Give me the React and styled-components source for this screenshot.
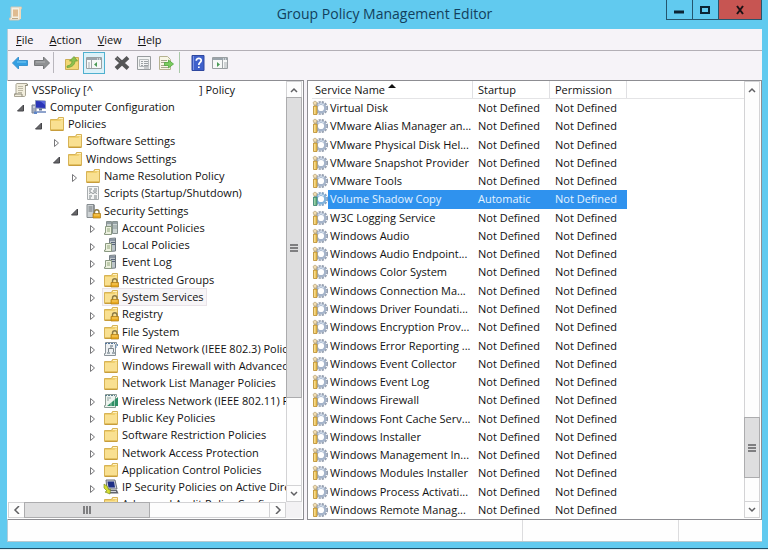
import React, { useState } from "react";
import styled, { createGlobalStyle } from "styled-components";

const GlobalStyle = createGlobalStyle`
  * {
    box-sizing: border-box;
  }
  body {
    margin: 0;
    font-family: "Open Sans", "Noto Sans", sans-serif;
    font-size: 11px;
    color: #111;
  }
  button {
    font: inherit;
    color: inherit;
    padding: 0;
    border: 0;
    background: none;
  }
`;

const Desktop = styled.div`
  height: 100vh;
  display: flex;
  flex-direction: column;
  background: #e9f0f2;
`;

const Window = styled.div`
  flex: 1;
  min-height: 0;
  margin-bottom: 1px;
  display: flex;
  flex-direction: column;
  padding: 0 6px 6px 7px;
  background: #61caef;
  border-bottom: 1px solid #1d506b;
`;

const TitleBar = styled.header`
  height: 29px;
  flex: none;
  display: grid;
  grid-template-columns: 96px 1fr 96px;
  align-items: start;
`;

const TitleIcon = styled.div`
  padding: 6px 0 0 1px;
  svg {
    display: block;
  }
`;

const Title = styled.h1`
  margin: 0;
  font-size: 14px;
  font-weight: 400;
  line-height: 28px;
  text-align: center;
  white-space: nowrap;
  color: #123f5c;
`;

const WindowButtons = styled.div`
  display: flex;
  height: 20px;
  border: 1px solid #24566e;
  border-top: 0;
`;

const WindowButton = styled.button`
  flex: ${(p) => (p.$close ? "44" : "26")} 1 0;
  display: grid;
  place-items: center;
  background: ${(p) => (p.$close ? "#c75552" : "transparent")};
  & + & {
    border-left: 1px solid #24566e;
  }
`;

const Client = styled.div`
  flex: 1;
  min-height: 0;
  display: flex;
  flex-direction: column;
  background: #f6f3f8;
  border-left: 1px solid #b4cdd9;
`;

const MenuBar = styled.nav`
  height: 22px;
  flex: none;
  display: flex;
  align-items: center;
  gap: 16px;
  padding-left: 8px;
  border-bottom: 1px solid #b3afb6;
`;

const MenuItem = styled.button`
  line-height: 20px;
  &::first-letter {
    text-decoration: underline;
  }
`;

const Toolbar = styled.div`
  height: 29px;
  flex: none;
  display: flex;
  align-items: center;
  padding: 0 0 6px 1px;
`;

const ToolButton = styled.button`
  width: 22px;
  height: 22px;
  display: grid;
  place-items: center;
  border: 1px solid ${(p) => (p.$active ? "#4fb0cf" : "transparent")};
  background: ${(p) => (p.$active ? "#dcf1f9" : "transparent")};
`;

const ToolDivider = styled.div`
  width: 1px;
  height: 21px;
  margin: 0 7px 0 ${(p) => p.$before || 0}px;
  background: ${(p) => p.$tint || "#b9b6bd"};
`;

const ToolGap = styled.div`
  width: 6px;
`;

const Panes = styled.div`
  flex: 1;
  min-height: 0;
  display: grid;
  grid-template-columns: 296fr 455fr;
  column-gap: 3px;
`;

const Pane = styled.section`
  min-width: 0;
  min-height: 0;
  display: grid;
  grid-template-columns: minmax(0, 1fr) 16px;
  grid-template-rows: minmax(0, 1fr) auto;
  background: #fff;
  border: 1px solid #8d8d92;
  border-left-color: ${(p) => (p.$flush ? "transparent" : "#8d8d92")};
  padding-right: 1px;
  padding-bottom: 1px;
  margin-left: ${(p) => (p.$flush ? "-1px" : "0")};
`;

const TreeView = styled.div`
  overflow: hidden;
`;

// 25 rows share the list height
const Tree = styled.ul`
  margin: 0;
  padding: 0;
  height: 432px;
  list-style: none;
  display: grid;
  grid-auto-rows: 1fr;
`;

const TreeRow = styled.li`
  display: flex;
  align-items: center;
  padding-left: ${(p) => 5 + p.$level * 18}px;
  white-space: pre;
`;

const Toggle = styled.button`
  width: 14px;
  height: 14px;
  margin-left: -14px;
  flex: none;
  svg {
    display: block;
    margin-top: 3px;
  }
`;

const TreeLabel = styled.span`
  display: flex;
  align-items: center;
  gap: 3px;
  line-height: 16px;
  padding-right: 2px;
  background: ${(p) => (p.$selected ? "#f7f5f7" : "transparent")};
  box-shadow: ${(p) => (p.$selected ? "0 0 0 1px #e9e3e8" : "none")};
  svg {
    flex: none;
  }
`;

const Redacted = styled.span`
  display: inline-block;
  width: 106px;
`;

const ScrollBar = styled.div`
  display: flex;
  flex-direction: ${(p) => (p.$horizontal ? "row" : "column")};
  ${(p) => (p.$horizontal ? "height: 16px" : "width: 16px")};
  border: 1px solid #d3d3d5;
  background: #fdfdfd;
`;

const ScrollArrow = styled.button`
  flex: none;
  width: ${(p) => (p.$horizontal ? 16 : 14)}px;
  height: ${(p) => (p.$horizontal ? 14 : 16)}px;
  display: grid;
  place-items: center;
  &:last-child {
    ${(p) => (p.$horizontal ? "border-left" : "border-top")}: 1px solid #d3d3d5;
  }
`;

const Track = styled.div`
  flex: ${(p) => p.$size} 1 0;
`;

const Thumb = styled.div`
  flex: ${(p) => p.$size} 1 0;
  display: grid;
  place-items: center;
  background: #dededf;
  outline: 1px solid #acacae;
`;

const Corner = styled.div`
  background: #f3f2f4;
`;

const ServiceView = styled.div`
  overflow: hidden;
  padding-left: 4px;
`;

const ServiceTable = styled.table`
  display: block;
  width: 100%;
`;

const columns = "161px 77px 77px 1fr";

const Head = styled.thead`
  display: block;
  border-bottom: 1px solid #e4e4e6;
  tr {
    display: grid;
    grid-template-columns: ${columns};
  }
`;

const HeadCell = styled.th`
  padding: 0 0 0 ${(p) => p.$pad || 5}px;
  border-right: 1px solid #e0e0e3;
  font-weight: 400;
  line-height: 17px;
  text-align: left;
  white-space: nowrap;
  svg {
    vertical-align: 6px;
    margin-left: 3px;
  }
`;

const Body = styled.tbody`
  display: grid;
  grid-auto-rows: 1fr;
  height: 420px;
`;

const ServiceRow = styled.tr`
  display: grid;
  grid-template-columns: ${columns};
  align-items: center;
  color: ${(p) => (p.$selected ? "#e4f3ff" : "inherit")};
  background: ${(p) =>
    p.$selected
      ? "linear-gradient(#2f92ee, #2f92ee) 16px 0 / 299px 100% no-repeat"
      : "none"};
`;

const Cell = styled.td`
  padding: 0 0 0 5px;
  line-height: 18px;
  white-space: nowrap;
`;

const NameCell = styled(Cell)`
  display: flex;
  align-items: center;
  gap: 2px;
  padding: 0;
  svg {
    flex: none;
  }
`;

const StatusBar = styled.footer`
  height: 22px;
  flex: none;
  display: grid;
  grid-template-columns: 514fr 156fr 84fr;
  background: #fefefe;
  border-bottom: 1px solid #b9c9cf;
  div + div {
    border-left: 1px solid #dcdcde;
  }
`;

const Svg = ({ children, size = 16, h }) => (
  <svg
    width={size}
    height={h || size}
    viewBox={`0 0 ${size} ${h || size}`}
    fill="none"
    aria-hidden="true"
  >
    {children}
  </svg>
);

const Scroll = () => (
  <Svg>
    <path d="M4 1.5h10v2h-1.5v9.5c0 1-.6 1.500-1.500 1.500H1.500V12H3V3c0-1 .4-1.500 1-1.500z" fill="#f2eedd" stroke="#a9a595" />
    <path d="M12 3.500h2.500V2M1.500 12H9v2.500" stroke="#8b8878" />
    <path d="M5 4.500h5M5 6.500h5M5 8.500h5M5 10.500h4" stroke="#bdb9a5" />
  </Svg>
);

const TitleScroll = () => (
  <Svg>
    <path d="M3 1h10.500v2H12v9.500c0 1-.6 1.500-1.500 1.500H1.500v-2H3z" fill="#f5efe2" stroke="#cfc7b6" />
    <path d="M5 3.500h5v7H5z" fill="#dfbb91" />
    <path d="M12 1v12" stroke="#f0d9ba" strokeWidth="2" />
    <path d="M4 12.500h6" stroke="#bda786" />
  </Svg>
);

const Computer = () => (
  <Svg>
    <path d="M1 6h4v8H1z" fill="#a6adbd" stroke="#7d8595" />
    <path d="M2 8h2" stroke="#eef1f6" />
    <path d="M4.500 1.500 14.500 2v7.500l-10-.5z" fill="#2a35b8" stroke="#8b97bb" />
    <path d="M9 2h5v4z" fill="#5867dc" />
    <path d="M8 9.500h3v2H8z" fill="#5c6d90" />
    <path d="M6 12h9v2H6z" fill="#8fa3cc" />
    <path d="M3 12.500h3V15H3z" fill="#5d86c9" />
  </Svg>
);

const Folder = ({ lock }) => (
  <Svg>
    <path d="M1.500 3.500h7l1-2h5v12.500h-13z" fill="#f0cf6c" stroke="#d7b356" />
    <path d="M2 5h9.500l1-1.500H14V13H2z" fill="#f9e091" />
    <path d="M10 2.500h4" stroke="#fff3c5" />
    <path d="M1.500 14.500h13" stroke="#c79d3c" />
    {lock && <Lock />}
  </Svg>
);

const Lock = () => (
  <g>
    <path d="M9.500 11V9a2.200 2.200 0 0 1 4.500 0v2" stroke="#8b7a47" strokeWidth="1.400" />
    <path d="M8 10.500h7.500V15H8z" fill="#e9a91f" stroke="#ad7a12" strokeWidth=".7" />
    <path d="M9 12h5.500" stroke="#f8d270" />
  </g>
);

const ScriptIcon = () => (
  <Svg>
    <path d="M2.500 1.500h11v13h-11z" fill="#f4f5f5" stroke="#a8adaf" />
    <path d="M4 4h3M9 4h3M4 6h2M8 6h4M4 11h3M9 11h3M4 13h2M9 13h3" stroke="#7d8487" />
    <path d="m4 8.500 2-1 2 1 2-1 2 1" stroke="#8b9194" />
  </Svg>
);

const SecurityIcon = () => (
  <Svg>
    <path d="M2 1.500h7v13H2z" fill="#cdd2d4" stroke="#858b8f" />
    <path d="M3.500 4h4M3.500 6h4M3.500 8h4" stroke="#70777b" />
    <path d="M9 2v12" stroke="#6b7175" />
    <Lock />
  </Svg>
);

const PolicyServer = ({ twin }) => (
  <Svg>
    {twin ? (
      <g>
        <path d="M3.500 1.500h5v12h-5zM9.500 1.500h5v12h-5z" fill="#ccd5d2" stroke="#87918f" />
        <path d="M4 3h4M10 3h4" stroke="#5f6c78" />
        <path d="M10 6h4M10 8h4" stroke="#8b9799" />
      </g>
    ) : (
      <g>
        <path d="M6.500 1.500 12.500 1v13l-6 .5z" fill="#bdc5c9" stroke="#778087" />
        <path d="M7 3h5M8 5.500h4M8 7.500h4" stroke="#59657a" />
        <path d="M12.500 2v11" stroke="#6b747b" />
      </g>
    )}
    <path d="M2.500 6.500h6v8h-7v-1.500h1z" fill="#edf1df" stroke="#8b9a82" />
    <path d="M4 9h3M4 11h3" stroke="#93a87f" />
  </Svg>
);

const Wired = () => (
  <Svg>
    <path d="M2.500 1.500h11v2h-1v11h-11v-2h1z" fill="#eef1f3" stroke="#8a9399" />
    <path d="M2 2.500h10" stroke="#50749a" strokeDasharray="2 1" />
    <path d="M5.500 12V7.500h5V12M8 5v2.500" stroke="#7c868d" />
    <path d="M4 11h3v2H4zM9 11h3v2H9zM7 4h3v2H7z" fill="#a3adb3" />
    <path d="M13 4v3M14.500 3v2" stroke="#6a90b4" />
  </Svg>
);

const Wireless = () => (
  <Svg>
    <path d="M2.500 1.500h11v2h-1v11h-11v-2h1z" fill="#edf3ee" stroke="#8b9b94" />
    <path d="M2 2.500h10" stroke="#5a7d8c" strokeDasharray="2 1" />
    <path d="M4 5h4M4 7h2" stroke="#93a5a1" />
    <path d="M4 13 15 4v9z" fill="#2f8f66" />
    <path d="M8 9v4M11.500 7v6" stroke="#d7eee0" strokeWidth=".6" />
  </Svg>
);

const IpSecurity = () => (
  <Svg>
    <path d="m3 1 9 0 2 9H4z" fill="#d0d3d8" stroke="#6b6f79" />
    <path d="m4.500 2.500 6.500 0 1 6H5.500z" fill="#1f2f86" />
    <path d="M5 11h9l1.500 3.500H7z" fill="#63666f" />
    <path d="M7 12.500h6" stroke="#d5d7dc" />
    <path d="M1 5v4l3 3-2 1 5 2 .500-5-1.500 1-2-4z" fill="#d7df31" stroke="#6d8019" strokeWidth=".6" />
  </Svg>
);

const Gear = ({ selected }) => (
  <Svg>
    <circle cx="9" cy="8" r="6.200" stroke={selected ? "#7f9fc0" : "#939dae"} strokeWidth="1.800" strokeDasharray="2.200 1.050" />
    <circle cx="9" cy="8" r="4.300" fill="#fff" stroke={selected ? "#7fb2dc" : "#a5b4ca"} strokeWidth="2.400" />
    <path d="M6 5a4.300 4.300 0 0 1 6 0" stroke="#dbe5f0" />
    <path d="M1 2.500 3 1l2 1.500L4.500 5H2z" fill="#f2ddb1" stroke="#b4a27a" strokeWidth=".7" />
    <path
      d="M1.500 6h3.500v8.500H1.500z"
      fill={selected ? "#62ad79" : "#ebbe4d"}
      stroke={selected ? "#397f70" : "#b98d31"}
      strokeWidth=".8"
    />
    <path d="M2.800 7v7" stroke={selected ? "#b3e1bd" : "#fbe7a7"} />
  </Svg>
);

const Arrow = ({ right }) => (
  <Svg>
    <path
      d={
        right
          ? "M15.500 8 9.500 2v3.500h-9v5h9V14z"
          : "M.5 8l6-6v3.500h9v5h-9V14z"
      }
      fill={right ? "#8f9093" : "#349fe2"}
      stroke={right ? "#77787b" : "#3c93cf"}
    />
    <path d={right ? "M2 7h9" : "M5 7h9"} stroke={right ? "#b3b4b6" : "#7ccdf6"} />
  </Svg>
);

const UpFolder = () => (
  <Svg>
    <path d="M1.500 4.500h8l1-2h4v12h-13z" fill="#f2d774" stroke="#cdae55" />
    <path d="M3 11c3.500-.5 5-2.500 5-5H5.500L10 1.500 13.500 6H11c0 4-3.500 6.500-8 6.500z" fill="#8cc04e" stroke="#689b33" strokeWidth=".7" />
  </Svg>
);

const Panel = ({ flip }) => (
  <Svg>
    <path d="M.5 2.500h15v11H.500z" fill="#f7f8f8" stroke="#9a9fa2" />
    <path d="M1 4h14" stroke="#9aa3ab" strokeWidth="2" />
    <path d="M11 4h1M13 4h1" stroke="#fff" />
    <path d={flip ? "M10.500 5v8" : "M5.500 5v8"} stroke="#a0a5a8" />
    <path d={flip ? "M12 8h3M12 10h3M12 12h3" : "M2 8h2M2 10h2M2 12h2"} stroke="#a9aeb2" />
    <path d={flip ? "m5 7 3 2.500L5 12z" : "M11 7 8 9.500l3 2.500z"} fill="#4a9b56" />
  </Svg>
);

const DeleteIcon = () => (
  <Svg>
    <path d="m2 2.500 12 11M14 2.500l-12 11" stroke="#555557" strokeWidth="4" />
    <path d="m2 2 4 4" stroke="#858587" />
  </Svg>
);

const Properties = () => (
  <Svg>
    <path d="M1.500 1.500h13v13h-13z" fill="#f3f4f4" stroke="#989c9f" />
    <path d="M3.500 4.500h9v7h-9z" stroke="#b6babc" />
    <path d="M5 6.500h2M8 6.500h4M5 8.500h2M8 8.500h4M5 10.500h2M8 10.500h4M8 13h5" stroke="#9ca1a4" />
  </Svg>
);

const ExportIcon = () => (
  <Svg>
    <path d="M1.500 1.500h8l3 3v10h-11z" fill="#f8f6e6" stroke="#b6b291" />
    <path d="M3 5.500h6M3 7.500h5M3 10.500h5M3 12.500h7" stroke="#a5a68c" />
    <path d="M6.500 7.500h4V5l5 4-5 4v-2.500h-4z" fill="#7bcb5f" stroke="#4fa53a" strokeWidth=".8" />
  </Svg>
);

const HelpIcon = () => (
  <Svg>
    <path d="M2 .5h12v15H2z" fill="#3f60cb" stroke="#2f479f" />
    <path d="M3.500 1v14" stroke="#7d95e4" />
    <path d="M6.300 5.700C6.300 2.500 11.500 2.700 11.200 5.700 11 7.500 8.800 7.500 8.800 10" stroke="#fff" strokeWidth="1.700" />
    <path d="M8 11.500h1.700V13H8z" fill="#fff" />
  </Svg>
);

const chevrons = {
  up: "M1 6l3-3 3 3",
  down: "M1 2l3 3 3-3",
  left: "M6 0L2 4l4 4",
  right: "M2 0l4 4-4 4",
};

const Chevron = ({ dir }) => (
  <Svg size={8}>
    <path d={chevrons[dir]} stroke="#606063" strokeWidth="1.500" />
  </Svg>
);

const Grip = ({ horizontal }) => (
  <Svg size={8}>
    <path d={horizontal ? "M1 0v8M4 0v8M7 0v8" : "M0 1h8M0 4h8M0 7h8"} stroke="#606063" strokeWidth="1.500" />
  </Svg>
);

const icons = {
  scroll: <Scroll />,
  computer: <Computer />,
  folder: <Folder />,
  locked: <Folder lock />,
  script: <ScriptIcon />,
  security: <SecurityIcon />,
  account: <PolicyServer twin />,
  policy: <PolicyServer />,
  wired: <Wired />,
  wireless: <Wireless />,
  ip: <IpSecurity />,
};

// level, icon, label, toggle state
const tree = [
  [1, "computer", "Computer Configuration", "open"],
  [2, "folder", "Policies", "open"],
  [3, "folder", "Software Settings", "closed"],
  [3, "folder", "Windows Settings", "open"],
  [4, "folder", "Name Resolution Policy", "closed"],
  [4, "script", "Scripts (Startup/Shutdown)"],
  [4, "security", "Security Settings", "open"],
  [5, "account", "Account Policies", "closed"],
  [5, "policy", "Local Policies", "closed"],
  [5, "policy", "Event Log", "closed"],
  [5, "locked", "Restricted Groups", "closed"],
  [5, "locked", "System Services", "closed"],
  [5, "locked", "Registry", "closed"],
  [5, "locked", "File System", "closed"],
  [5, "wired", "Wired Network (IEEE 802.3) Policies", "closed"],
  [5, "folder", "Windows Firewall with Advanced Security", "closed"],
  [5, "folder", "Network List Manager Policies"],
  [5, "wireless", "Wireless Network (IEEE 802.11) Policies", "closed"],
  [5, "folder", "Public Key Policies", "closed"],
  [5, "folder", "Software Restriction Policies", "closed"],
  [5, "folder", "Network Access Protection", "closed"],
  [5, "folder", "Application Control Policies", "closed"],
  [5, "ip", "IP Security Policies on Active Directory", "closed"],
  [5, "folder", "Advanced Audit Policy Configuration"],
];

const services = [
  "Virtual Disk",
  "VMware Alias Manager an...",
  "VMware Physical Disk Hel...",
  "VMware Snapshot Provider",
  "VMware Tools",
  "Volume Shadow Copy",
  "W3C Logging Service",
  "Windows Audio",
  "Windows Audio Endpoint...",
  "Windows Color System",
  "Windows Connection Ma...",
  "Windows Driver Foundati...",
  "Windows Encryption Prov...",
  "Windows Error Reporting ...",
  "Windows Event Collector",
  "Windows Event Log",
  "Windows Firewall",
  "Windows Font Cache Serv...",
  "Windows Installer",
  "Windows Management In...",
  "Windows Modules Installer",
  "Windows Process Activati...",
  "Windows Remote Manag...",
];

function Scroller({ horizontal, before, thumb, after }) {
  return (
    <ScrollBar $horizontal={horizontal}>
      <ScrollArrow $horizontal={horizontal} aria-label="Scroll back">
        <Chevron dir={horizontal ? "left" : "up"} />
      </ScrollArrow>
      <Track $size={before} />
      <Thumb $size={thumb}>
        <Grip horizontal={horizontal} />
      </Thumb>
      <Track $size={after} />
      <ScrollArrow $horizontal={horizontal} aria-label="Scroll forward">
        <Chevron dir={horizontal ? "right" : "down"} />
      </ScrollArrow>
    </ScrollBar>
  );
}

function TreeNode({ level, icon, label, toggle, selected }) {
  return (
    <TreeRow $level={level}>
      {toggle && (
        <Toggle aria-label={label} aria-expanded={toggle === "open"}>
          <Svg size={8}>
            {toggle === "open" ? (
              <path d="M6.500 1v6h-6z" fill="#67676a" stroke="#454548" />
            ) : (
              <path d="M1.500 0.500v7l4-3.500z" fill="#fff" stroke="#77777a" />
            )}
          </Svg>
        </Toggle>
      )}
      <TreeLabel $selected={selected}>
        {icons[icon]}
        <span>{label}</span>
      </TreeLabel>
    </TreeRow>
  );
}

function App() {
  const [service, setService] = useState("Volume Shadow Copy");

  return (
    <Desktop>
      <GlobalStyle />
      <Window>
        <TitleBar>
          <TitleIcon>
            <TitleScroll />
          </TitleIcon>
          <Title>Group Policy Management Editor</Title>
          <WindowButtons>
            <WindowButton aria-label="Minimize">
              <Svg size={10}>
                <path d="M0 7h10" stroke="#0c2434" strokeWidth="3" />
              </Svg>
            </WindowButton>
            <WindowButton aria-label="Maximize">
              <Svg size={10}>
                <path d="M1 2h8v6H1z" stroke="#0c2434" strokeWidth="2" />
              </Svg>
            </WindowButton>
            <WindowButton $close aria-label="Close">
              <Svg size={10}>
                <path d="m2 1 6 8M8 1 2 9" stroke="#1c1216" strokeWidth="2" />
              </Svg>
            </WindowButton>
          </WindowButtons>
        </TitleBar>
        <Client>
          <MenuBar>
            <MenuItem>File</MenuItem>
            <MenuItem>Action</MenuItem>
            <MenuItem>View</MenuItem>
            <MenuItem>Help</MenuItem>
          </MenuBar>
          <Toolbar>
            <ToolButton aria-label="Back">
              <Arrow />
            </ToolButton>
            <ToolButton aria-label="Forward">
              <Arrow right />
            </ToolButton>
            <ToolDivider />
            <ToolButton aria-label="Up">
              <UpFolder />
            </ToolButton>
            <ToolButton $active aria-label="Show tree">
              <Panel />
            </ToolButton>
            <ToolGap />
            <ToolButton aria-label="Delete">
              <DeleteIcon />
            </ToolButton>
            <ToolButton aria-label="Properties">
              <Properties />
            </ToolButton>
            <ToolButton aria-label="Export list">
              <ExportIcon />
            </ToolButton>
            <ToolDivider $before={2} $tint="#a9c9a8" />
            <ToolButton aria-label="Help topics">
              <HelpIcon />
            </ToolButton>
            <ToolButton aria-label="Show actions">
              <Panel flip />
            </ToolButton>
          </Toolbar>
          <Panes>
            <Pane $flush>
              <TreeView>
                <Tree>
                  <TreeNode
                    level={0}
                    icon="scroll"
                    label={
                      <>
                        VSSPolicy [^
                        <Redacted />] Policy
                      </>
                    }
                  />
                  {tree.map(([level, icon, label, toggle]) => (
                    <TreeNode
                      key={label}
                      level={level}
                      icon={icon}
                      label={label}
                      toggle={toggle}
                      selected={label === "System Services"}
                    />
                  ))}
                </Tree>
              </TreeView>
              <Scroller before={0} thumb={300} after={88} />
              <Scroller horizontal before={0} thumb={124} after={120} />
              <Corner />
            </Pane>
            <Pane>
              <ServiceView>
                <ServiceTable>
                  <Head>
                    <tr>
                      <HeadCell $pad={3}>
                        Service Name
                        <Svg size={8} h={4}>
                          <path d="M0 4l4-4 4 4z" fill="#111" />
                        </Svg>
                      </HeadCell>
                      <HeadCell>Startup</HeadCell>
                      <HeadCell>Permission</HeadCell>
                    </tr>
                  </Head>
                  <Body>
                    {services.map((name) => (
                      <ServiceRow
                        key={name}
                        $selected={name === service}
                        onClick={() => setService(name)}
                      >
                        <NameCell>
                          <Gear selected={name === service} />
                          <span>{name}</span>
                        </NameCell>
                        <Cell>
                          {name === "Volume Shadow Copy"
                            ? "Automatic"
                            : "Not Defined"}
                        </Cell>
                        <Cell>Not Defined</Cell>
                      </ServiceRow>
                    ))}
                  </Body>
                </ServiceTable>
              </ServiceView>
              <Scroller before={321} thumb={59} after={24} />
            </Pane>
          </Panes>
          <StatusBar>
            <div />
            <div />
            <div />
          </StatusBar>
        </Client>
      </Window>
    </Desktop>
  );
}

export default App;
